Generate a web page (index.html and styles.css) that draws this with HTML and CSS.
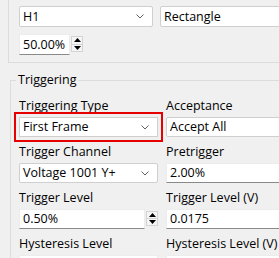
FILE: index.html
```html
<!DOCTYPE html>
<html>
<head>
<meta charset="utf-8">
<link rel="stylesheet" href="styles.css">
</head>
<body>
<div class="page">
  <div class="group top-group">
    <div class="row">
      <div class="combo combo-h1"><span class="val">H1</span><svg class="chev" width="8" height="5" viewBox="0 0 8 5"><path d="M0.5 0.5 L4 4 L7.5 0.5" fill="none" stroke="#606060" stroke-width="1"/></svg></div>
      <div class="combo combo-wide"><span class="val">Rectangle</span></div>
    </div>
    <div class="spin spin-small">
      <div class="edit">50.00%</div>
      <div class="spin-btns">
        <div class="sbtn"><svg width="7" height="4" viewBox="0 0 7 4"><path d="M0 4 L3.5 0 L7 4 Z" fill="#000"/></svg></div>
        <div class="sbtn"><svg width="7" height="4" viewBox="0 0 7 4"><path d="M0 0 L3.5 4 L7 0 Z" fill="#000"/></svg></div>
      </div>
    </div>
  </div>

  <fieldset class="trig">
    <legend>Triggering</legend>
    <div class="grid">
      <div class="cell">
        <div class="lbl">Triggering Type</div>
        <div class="combo highlighted"><span class="val">First Frame</span><svg class="chev" width="8" height="5" viewBox="0 0 8 5"><path d="M0.5 0.5 L4 4 L7.5 0.5" fill="none" stroke="#606060" stroke-width="1"/></svg></div>
      </div>
      <div class="cell">
        <div class="lbl">Acceptance</div>
        <div class="combo"><span class="val">Accept All</span></div>
      </div>
      <div class="cell">
        <div class="lbl">Trigger Channel</div>
        <div class="combo"><span class="val">Voltage 1001 Y+</span><svg class="chev" width="8" height="5" viewBox="0 0 8 5"><path d="M0.5 0.5 L4 4 L7.5 0.5" fill="none" stroke="#606060" stroke-width="1"/></svg></div>
      </div>
      <div class="cell">
        <div class="lbl">Pretrigger</div>
        <div class="edit">2.00%</div>
      </div>
      <div class="cell">
        <div class="lbl">Trigger Level</div>
        <div class="spin">
          <div class="edit">0.50%</div>
          <div class="spin-btns">
            <div class="sbtn"><svg width="7" height="4" viewBox="0 0 7 4"><path d="M0 4 L3.5 0 L7 4 Z" fill="#000"/></svg></div>
            <div class="sbtn"><svg width="7" height="4" viewBox="0 0 7 4"><path d="M0 0 L3.5 4 L7 0 Z" fill="#000"/></svg></div>
          </div>
        </div>
      </div>
      <div class="cell">
        <div class="lbl">Trigger Level (V)</div>
        <div class="edit">0.0175</div>
      </div>
      <div class="cell">
        <div class="lbl">Hysteresis Level</div>
        <div class="edit"></div>
      </div>
      <div class="cell">
        <div class="lbl">Hysteresis Level (V)</div>
        <div class="edit"></div>
      </div>
    </div>
  </fieldset>
</div>
</body>
</html>
```

FILE: styles.css
```css
html, body {
  margin: 0;
  padding: 0;
  background: #f0f0f0;
}
body {
  font-family: "Open Sans", "Noto Sans", sans-serif;
  font-size: 12.5px;
  color: #000;
}
.page {
  width: 279px;
  height: 258px;
  overflow: hidden;
}
.group {
  box-sizing: border-box;
}
.top-group {
  margin-top: -10px;
  margin-left: 8px;
  width: 340px;
  border: 1px solid #dcdcdc;
  padding: 15px 0 7px 10px;
  display: flex;
  flex-direction: column;
  gap: 7px;
}
.row {
  display: flex;
  gap: 7px;
}
.combo {
  box-sizing: border-box;
  height: 20px;
  background: #fff;
  border: 1px solid #cfcfcf;
  border-radius: 2px;
  display: flex;
  align-items: center;
  justify-content: space-between;
  padding: 0 8px 0 3px;
  white-space: nowrap;
  line-height: 16px;
}
.top-group .combo {
  height: 21px;
}
.combo-h1 {
  width: 134px;
}
.combo-wide {
  width: 160px;
}
.chev {
  flex: none;
}
.edit {
  box-sizing: border-box;
  height: 20px;
  background: #fff;
  border: 1px solid #ececec;
  border-bottom-color: #8a8a8a;
  padding: 0 3px;
  line-height: 18px;
  white-space: nowrap;
  overflow: hidden;
}
.spin {
  display: flex;
  align-items: stretch;
  height: 20px;
}
.spin .edit {
  flex: 1;
  min-width: 0;
}
.spin-small {
  width: 64px;
  height: 21px;
}
.spin-small .edit {
  height: 21px;
  line-height: 19px;
}
.spin-btns {
  width: 13px;
  flex: none;
  display: flex;
  flex-direction: column;
  padding: 2px 0 3px 1px;
  box-sizing: border-box;
}
.sbtn {
  flex: 1;
  display: flex;
  align-items: center;
  justify-content: center;
  background: #f5f5f5;
  border: 1px solid #d4d4d4;
}
.sbtn + .sbtn {
  border-top: none;
}
.trig {
  margin: 9px 0 0 10px;
  padding: 0;
  width: 330px;
  box-sizing: border-box;
  border: 1px solid #dcdcdc;
  border-right: none;
  border-bottom: none;
  min-inline-size: 0;
}
.trig legend {
  margin-left: 5px;
  padding: 0 2px;
  line-height: 16px;
}
.grid {
  display: grid;
  grid-template-columns: 139px 160px;
  column-gap: 8px;
  row-gap: 7px;
  padding: 10px 0 0 8px;
}
.cell {
  display: flex;
  flex-direction: column;
  gap: 3px;
}
.lbl {
  line-height: 16px;
  white-space: nowrap;
}
.highlighted {
  border-radius: 0;
  outline: 2px solid #e60000;
  outline-offset: 3px;
}
```
